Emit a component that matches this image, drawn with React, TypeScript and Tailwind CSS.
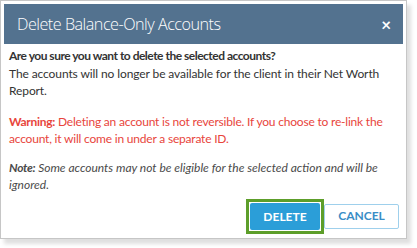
export default function App() {
  return (
    <div className="w-[417px] h-[248px] bg-white font-['Lato',sans-serif]">
      <div className="w-[407px] h-[239px] border border-[#c6c6c6] bg-white p-[3px] shadow-[4px_5px_4px_rgba(0,0,0,0.13)] flex flex-col">
        {/* Header */}
        <div className="h-[40px] shrink-0 bg-[#53728f] flex items-center justify-between pl-[13px] pr-[12px] text-white">
          <span className="font-['Open_Sans',sans-serif] text-[16.2px] font-light tracking-[-0.5px]">
            Delete Balance-Only Accounts
          </span>
          <span className="text-[17px] font-bold leading-none">×</span>
        </div>

        {/* Body */}
        <div className="flex-1 px-[5px] pt-[3px] text-[12px] leading-[17.5px] tracking-[-0.1px] text-[#333] whitespace-nowrap">
          <p>
            <span className="font-bold tracking-[-0.5px]">Are you sure you want to delete the selected accounts?</span>
            <br />
            The accounts will no longer be available for the client in their Net Worth
            <br />
            Report.
          </p>
          <p className="mt-[13px] text-[#e8453c] tracking-[-0.2px]">
            <span className="font-bold tracking-[-0.3px]">Warning:</span> Deleting an account is not reversible. If you choose to re-link the
            <br />
            account, it will come in under a separate ID.
          </p>
          <p className="mt-[11px] italic text-[#4a4a4a] tracking-[0px]">
            <span className="font-bold tracking-[-0.3px]">Note:</span> Some accounts may not be eligible for the selected action and will be
            <br />
            ignored.
          </p>
        </div>

        {/* Footer */}
        <div className="flex justify-end items-center pr-[4px] pb-[1px]">
          <div className="border-[3px] border-[#5d9e2a] p-[1px]">
            <button className="w-[70px] h-[27px] rounded-[2px] bg-[#2b9ed8] text-white text-[12px] font-bold">
              DELETE
            </button>
          </div>
          <button className="w-[75px] h-[25px] rounded-[2px] border border-[#9fd0ec] bg-white text-[#3a8dc6] text-[12px] font-bold">
            CANCEL
          </button>
        </div>
      </div>
    </div>
  );
}
